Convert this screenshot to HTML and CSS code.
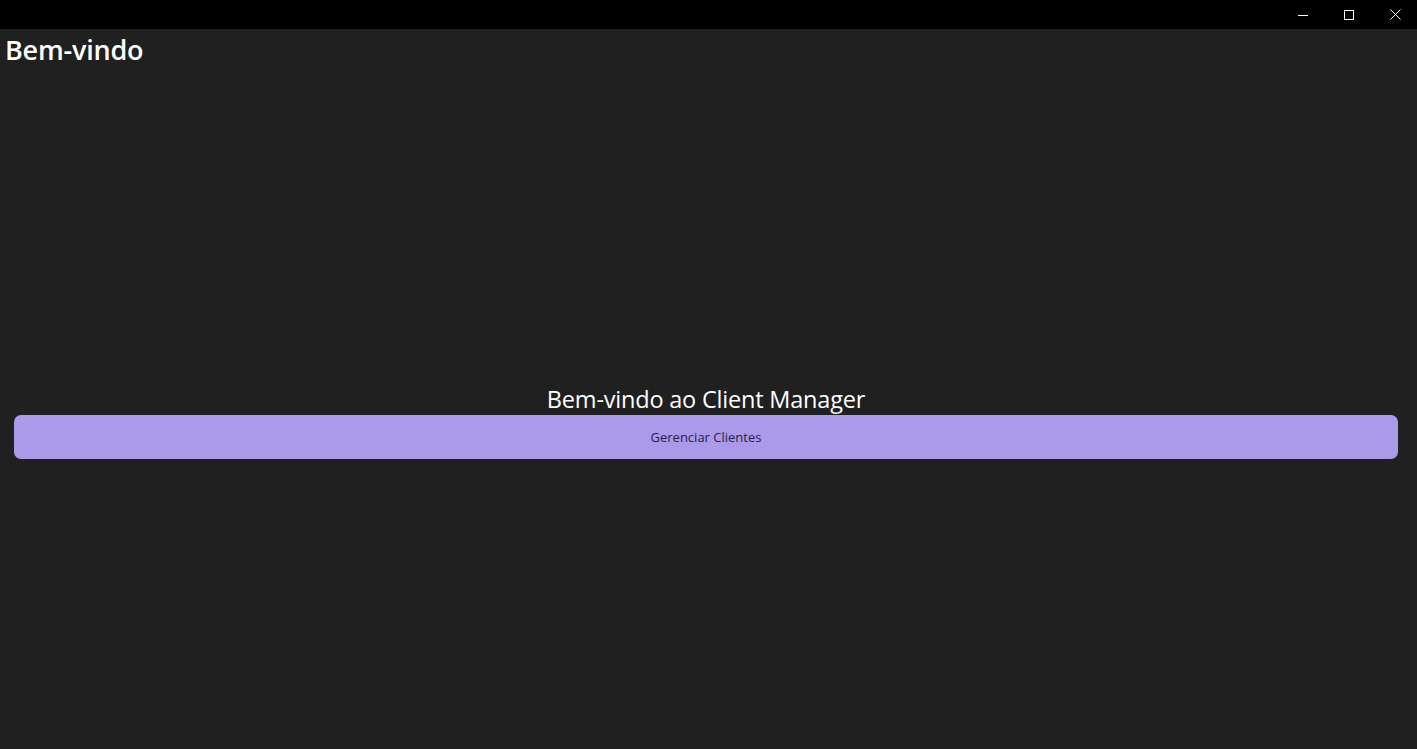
FILE: index.html
```html
<!DOCTYPE html>
<html lang="pt">
<head>
<meta charset="utf-8">
<title>Bem-vindo</title>
<link rel="stylesheet" href="styles.css">
</head>
<body>
<div class="window">
  <div class="titlebar">
    <div class="caption-buttons">
      <div class="cap-btn"><svg width="10" height="10" viewBox="0 0 10 10"><path d="M0 5.5H10" stroke="#fff" stroke-width="1"/></svg></div>
      <div class="cap-btn"><svg width="10" height="10" viewBox="0 0 10 10"><rect x="0.5" y="0.5" width="9" height="9" fill="none" stroke="#fff" stroke-width="1"/></svg></div>
      <div class="cap-btn"><svg width="11" height="11" viewBox="0 0 11 11"><path d="M0.5 0.5L10.5 10.5M10.5 0.5L0.5 10.5" stroke="#fff" stroke-width="1"/></svg></div>
    </div>
  </div>
  <div class="page-header">Bem-vindo</div>
  <main class="content">
    <div class="welcome">Bem-vindo ao Client Manager</div>
    <button class="primary-btn">Gerenciar Clientes</button>
  </main>
</div>
</body>
</html>
```
FILE: styles.css
```css
* { box-sizing: border-box; }
html, body {
  margin: 0;
  padding: 0;
  height: 100%;
  background: #202020;
  font-family: "Open Sans", "Noto Sans", sans-serif;
  color: #fff;
}
.window {
  display: flex;
  flex-direction: column;
  height: 749px;
}
.titlebar {
  height: 29px;
  background: #000;
  display: flex;
  justify-content: flex-end;
  flex-shrink: 0;
}
.caption-buttons {
  display: flex;
  margin-right: -1px;
}
.cap-btn {
  width: 46px;
  height: 29px;
  display: flex;
  align-items: center;
  justify-content: center;
}
.page-header {
  font-size: 27px;
  font-weight: 600;
  padding: 4px 0 0 5px;
  line-height: 34px;
  height: 43px;
  letter-spacing: -0.2px;
}
.content {
  flex: 1;
  display: flex;
  flex-direction: column;
  justify-content: center;
  align-items: stretch;
  padding: 22px 19px 0 14px;
}
.welcome {
  text-align: center;
  font-size: 23.5px;
  line-height: 30px;
  letter-spacing: -0.2px;
}
.primary-btn {
  margin-top: 1px;
  height: 44px;
  border: none;
  border-radius: 7px;
  background: #ab99ea;
  color: #2a2340;
  font-family: "Open Sans", "Noto Sans", sans-serif;
  font-size: 13px;
}
```
